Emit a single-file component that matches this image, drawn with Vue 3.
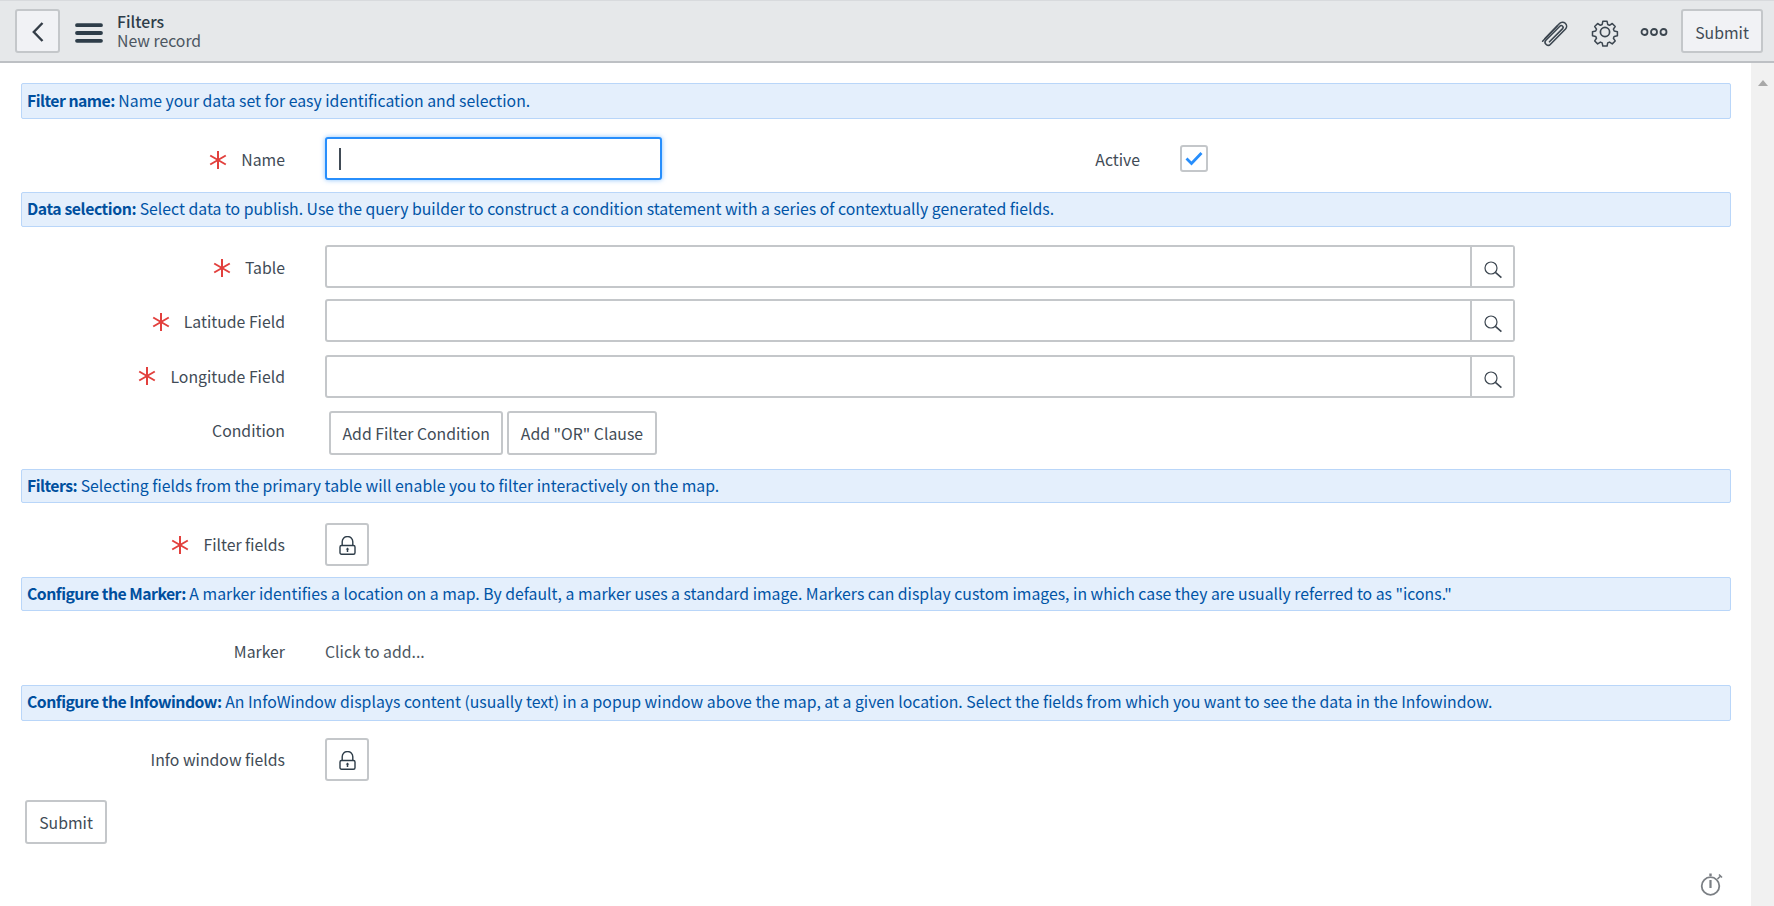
<script setup>
const selections = ['Table', 'Latitude Field', 'Longitude Field']
</script>

<template>
  <div class="page">
    <header class="bar">
      <button class="btn back" aria-label="Back">
        <svg width="14" height="22" viewBox="0 0 14 22"><path d="M11.5 2 2.8 11l8.7 9" fill="none" stroke="#343d47" stroke-width="2.4" /></svg>
      </button>
      <svg class="burger" width="28" height="20" viewBox="0 0 28 20"><g stroke="#2e3d49" stroke-width="3.8" stroke-linecap="round"><path d="M2 2.2h24M2 10h24M2 17.8h24" /></g></svg>
      <div class="title">
        <div class="title-main">Filters</div>
        <div class="title-sub">New record</div>
      </div>
      <div class="bar-icons">
        <svg width="30" height="30" viewBox="0 0 30 30" fill="none" stroke="#3c4650" stroke-width="1.6" stroke-linecap="round"><path d="M5 21.5 19.5 6.5a4 4 0 0 1 6 5.5L10.5 27.2a3 3 0 0 1-4.6-4L19.8 9.2a1.8 1.8 0 0 1 2.8 2.4L9.5 24.8" /><path d="M2.6 24.2 17 9.2" /></svg>
        <svg width="30" height="30" viewBox="0 0 30 30" fill="none" stroke="#3c4650" stroke-width="1.7" stroke-linejoin="round"><path d="M12.6 3h4.8l.7 3.6 2 .9 3.1-2 3.3 3.4-2 3 .9 2.1 3.6.7v4.6l-3.6.7-.9 2.1 2 3-3.3 3.3-3.1-2-2 .9-.7 3.6h-4.8l-.7-3.6-2-.9-3.1 2-3.3-3.3 2-3-.9-2.1-3.6-.7v-4.6l3.6-.7.9-2.1-2-3 3.3-3.4 3.1 2 2-.9z" transform="translate(1.6 1.6) scale(.89)" /><circle cx="15" cy="15" r="4.6" /></svg>
        <svg width="28" height="10" viewBox="0 0 28 10" fill="none" stroke="#3c4650" stroke-width="1.8"><circle cx="4.5" cy="5" r="3" /><circle cx="14" cy="5" r="3" /><circle cx="23.5" cy="5" r="3" /></svg>
      </div>
      <button class="btn submit-top">Submit</button>
    </header>

    <div class="body">
      <main class="form">
        <div class="banner b1"><b>Filter name:</b> Name your data set for easy identification and selection.</div>
        <div class="row name-row">
          <label class="label"><svg class="star" viewBox="0 0 18 18"><path d="M9 0v18M1.2 4.5l15.6 9M16.8 4.5l-15.6 9" stroke="#e2403d" stroke-width="2" /></svg>Name</label>
          <div class="input focus"><span class="caret"></span></div>
          <label class="label active-label">Active</label>
          <span class="check">
            <svg width="18" height="15" viewBox="0 0 18 15"><path d="M1.5 7.5 6.5 12.5 16.5 2" fill="none" stroke="#278efc" stroke-width="2.8" /></svg>
          </span>
        </div>

        <div class="banner b2"><b>Data selection:</b> Select data to publish. Use the query builder to construct a condition statement with a series of contextually generated fields.</div>
        <div class="selects">
          <div v-for="s in selections" :key="s" class="row lookup-row">
            <label class="label"><svg class="star" viewBox="0 0 18 18"><path d="M9 0v18M1.2 4.5l15.6 9M16.8 4.5l-15.6 9" stroke="#e2403d" stroke-width="2" /></svg>{{ s }}</label>
            <div class="lookup">
              <div class="lookup-field"></div>
              <button class="lookup-btn" aria-label="Search">
                <svg width="18" height="18" viewBox="0 0 18 18" fill="none" stroke="#3c4650" stroke-width="1.2"><circle cx="7" cy="7" r="6" /><path d="M11.4 11.4 17.4 16.6" stroke-width="1.6" /></svg>
              </button>
            </div>
          </div>
        </div>
        <div class="row condition-row">
          <label class="label cond-label">Condition</label>
          <div class="cond-btns">
            <button class="btn plain">Add Filter Condition</button>
            <button class="btn plain">Add "OR" Clause</button>
          </div>
        </div>

        <div class="banner b3"><b>Filters:</b> Selecting fields from the primary table will enable you to filter interactively on the map.</div>
        <div class="row lock-row first-lock">
          <label class="label"><svg class="star" viewBox="0 0 18 18"><path d="M9 0v18M1.2 4.5l15.6 9M16.8 4.5l-15.6 9" stroke="#e2403d" stroke-width="2" /></svg>Filter fields</label>
          <button class="btn lock" aria-label="Unlock">
            <svg width="17" height="19" viewBox="0 0 17 19" fill="none" stroke="#2e3d49" stroke-width="1.4"><path d="M3.2 9.5V5.8a5.3 5.3 0 0 1 10.6 0v3.7" /><rect x="1" y="9.5" width="15" height="8.8" rx="1.5" /><path d="M8.5 13v3" stroke-width="1.5" /><path d="M6.7 13.6 8.5 11.6l1.8 2z" fill="#2e3d49" stroke="none" /></svg>
          </button>
        </div>

        <div class="banner b4"><b>Configure the Marker:</b> A marker identifies a location on a map. By default, a marker uses a standard image. Markers can display custom images, in which case they are usually referred to as "icons."</div>
        <div class="row marker-row">
          <label class="label">Marker</label>
          <span class="value">Click to add...</span>
        </div>

        <div class="banner b5"><b>Configure the Infowindow:</b> An InfoWindow displays content (usually text) in a popup window above the map, at a given location. Select the fields from which you want to see the data in the Infowindow.</div>
        <div class="row lock-row second-lock">
          <label class="label">Info window fields</label>
          <button class="btn lock" aria-label="Unlock">
            <svg width="17" height="19" viewBox="0 0 17 19" fill="none" stroke="#2e3d49" stroke-width="1.4"><path d="M3.2 9.5V5.8a5.3 5.3 0 0 1 10.6 0v3.7" /><rect x="1" y="9.5" width="15" height="8.8" rx="1.5" /><path d="M8.5 13v3" stroke-width="1.5" /><path d="M6.7 13.6 8.5 11.6l1.8 2z" fill="#2e3d49" stroke="none" /></svg>
          </button>
        </div>
        <button class="btn plain submit-bottom">Submit</button>
      </main>
      <aside class="scroll"><span class="arrow"></span></aside>
      <svg class="watch" width="24" height="26" viewBox="0 0 24 26" fill="none" stroke="#7b7f84" stroke-width="1.8"><circle cx="10.5" cy="15" r="8.8" /><path d="M10.5 9v8" stroke-width="2.2" /><path d="M10.5 2.5v2.5" stroke-width="2.4" /><path d="m17.5 8 3-3M19 3.5l3 3" stroke-width="1.6" /></svg>
    </div>
  </div>
</template>

<style>
html, body { margin: 0; overflow: hidden; }
</style>

<style scoped>
.page {
  width: 1774px;
  height: 906px;
  overflow: hidden;
  display: flex;
  flex-direction: column;
  font-family: "Noto Sans CJK JP", "Noto Sans", sans-serif;
  font-size: 15.8px;
  color: #414b56;
  background: #fff;
}
.bar {
  flex: none;
  box-sizing: content-box;
  height: 60px;
  display: flex;
  align-items: center;
  padding: 0 11px 0 15px;
  background: #e6e8ea;
  border-top: 1px solid #d8dadd;
  border-bottom: 2px solid #bdc0c4;
}
.btn {
  font: inherit;
  color: #414b56;
  background: #fff;
  border: 2px solid #c4c7ca;
  border-radius: 3px;
  box-sizing: border-box;
  padding: 0;
  display: inline-flex;
  align-items: center;
  justify-content: center;
}
.back {
  width: 45px;
  height: 44px;
  background: #f1f2f5;
  padding: 3px 0 0 1px;
  margin-top: -1px;
}
.burger { margin-left: 15px; margin-top: 3px; }
.title { margin-left: 14px; line-height: 19px; margin-top: -1px; }
.title-main { color: #2e3d49; font-weight: 500; }
.title-sub { color: #4c5661; }
.bar-icons {
  margin-left: auto;
  display: flex;
  align-items: center;
  gap: 20px;
  margin-right: 13px;
  padding-top: 1px;
}
.submit-top {
  width: 82px;
  height: 44px;
  background: #f1f2f5;
  padding-top: 3px;
  margin-top: -1px;
}
.body { flex: 1; display: flex; min-height: 0; position: relative; }
.form { flex: 1; min-width: 0; padding: 20px 20px 0 21px; }
.scroll { width: 23px; flex: none; background: #f1f1f1; display: flex; justify-content: center; padding-top: 17px; box-sizing: border-box; }
.arrow { width: 0; height: 0; border: 5px solid transparent; border-top: 0; border-bottom: 6px solid #a8a8a8; }
.banner {
  box-sizing: border-box;
  height: 36px;
  padding: 0 5px;
  background: #e4effc;
  border: 1px solid #b9d6f9;
  border-radius: 2px;
  color: #0054a6;
  white-space: nowrap;
  display: block;
  line-height: 31px;
}
.banner b { font-weight: 700; color: #004f9e; letter-spacing: -.52px; }
.b1 { line-height: 33px; }
.b2 { height: 35px; }
.b2 b { letter-spacing: -.42px; }
.b3 { height: 34px; }
.b4 { height: 34px; }
.row { display: flex; align-items: center; }
.label {
  width: 264px;
  margin-right: 40px;
  flex: none;
  display: flex;
  align-items: center;
  justify-content: flex-end;
}
.star { width: 18px; height: 18px; margin-right: 14px; flex: none; }
.name-row { height: 43px; margin: 18px 0 12px; }
.name-row .label { padding-top: 2px; }
.input {
  box-sizing: border-box;
  width: 337px;
  height: 43px;
  background: #fff;
  border: 2px solid #278efc;
  border-radius: 3px;
  box-shadow: 0 0 5px rgba(39, 142, 252, .55);
  display: flex;
  align-items: center;
  padding-left: 12px;
}
.caret { width: 1.5px; height: 22px; background: #414b56; }
.active-label { width: 478px; margin-right: 40px; }
.check {
  box-sizing: border-box;
  width: 28px;
  height: 27px;
  border: 2px solid #c4c7ca;
  border-radius: 3px;
  display: flex;
  align-items: center;
  justify-content: center;
  margin-top: -1px;
}
.selects { display: flex; flex-direction: column; gap: 11px; margin-top: 18px; }
.lookup-row { height: 43px; }
.lookup-row:nth-child(1) .label { padding-top: 2px; }
.lookup-row:nth-child(2) .label { padding-top: 2px; }
.lookup-row:nth-child(2) { margin-bottom: 2px; }
.lookup-row:nth-child(3) .label { padding-bottom: 1px; }
.lookup-row:nth-child(3) .lookup-btn { padding-top: 6px; }
.lookup {
  width: 1190px;
  height: 43px;
  box-sizing: border-box;
  display: flex;
  border: 2px solid #c4c7ca;
  border-radius: 3px;
}
.lookup-field { flex: 1; }
.lookup-btn {
  width: 43px;
  flex: none;
  border: 0;
  border-left: 2px solid #c4c7ca;
  background: #fff;
  padding: 7px 0 0;
  display: flex;
  align-items: center;
  justify-content: center;
}
.condition-row { margin-top: 13px; align-items: flex-start; height: 44px; margin-bottom: 14px; }
.cond-label { height: 38px; }
.cond-btns { display: flex; gap: 4px; margin-left: 4px; }
.plain { height: 44px; padding: 0 11.5px; background: #fff; }
.lock-row { height: 43px; }
.first-lock { margin: 20px 0 11px; }
.second-lock { margin: 17px 0 19px; }
.lock { width: 44px; height: 43px; padding: 2px 0 0 1px; }
.marker-row { height: 74px; padding-top: 6px; box-sizing: border-box; }
.value { color: #4c5661; }
.submit-bottom { display: flex; width: 82px; padding: 0; margin: 0 0 0 4px; }
.watch { position: absolute; right: 50px; bottom: 9px; }
</style>
